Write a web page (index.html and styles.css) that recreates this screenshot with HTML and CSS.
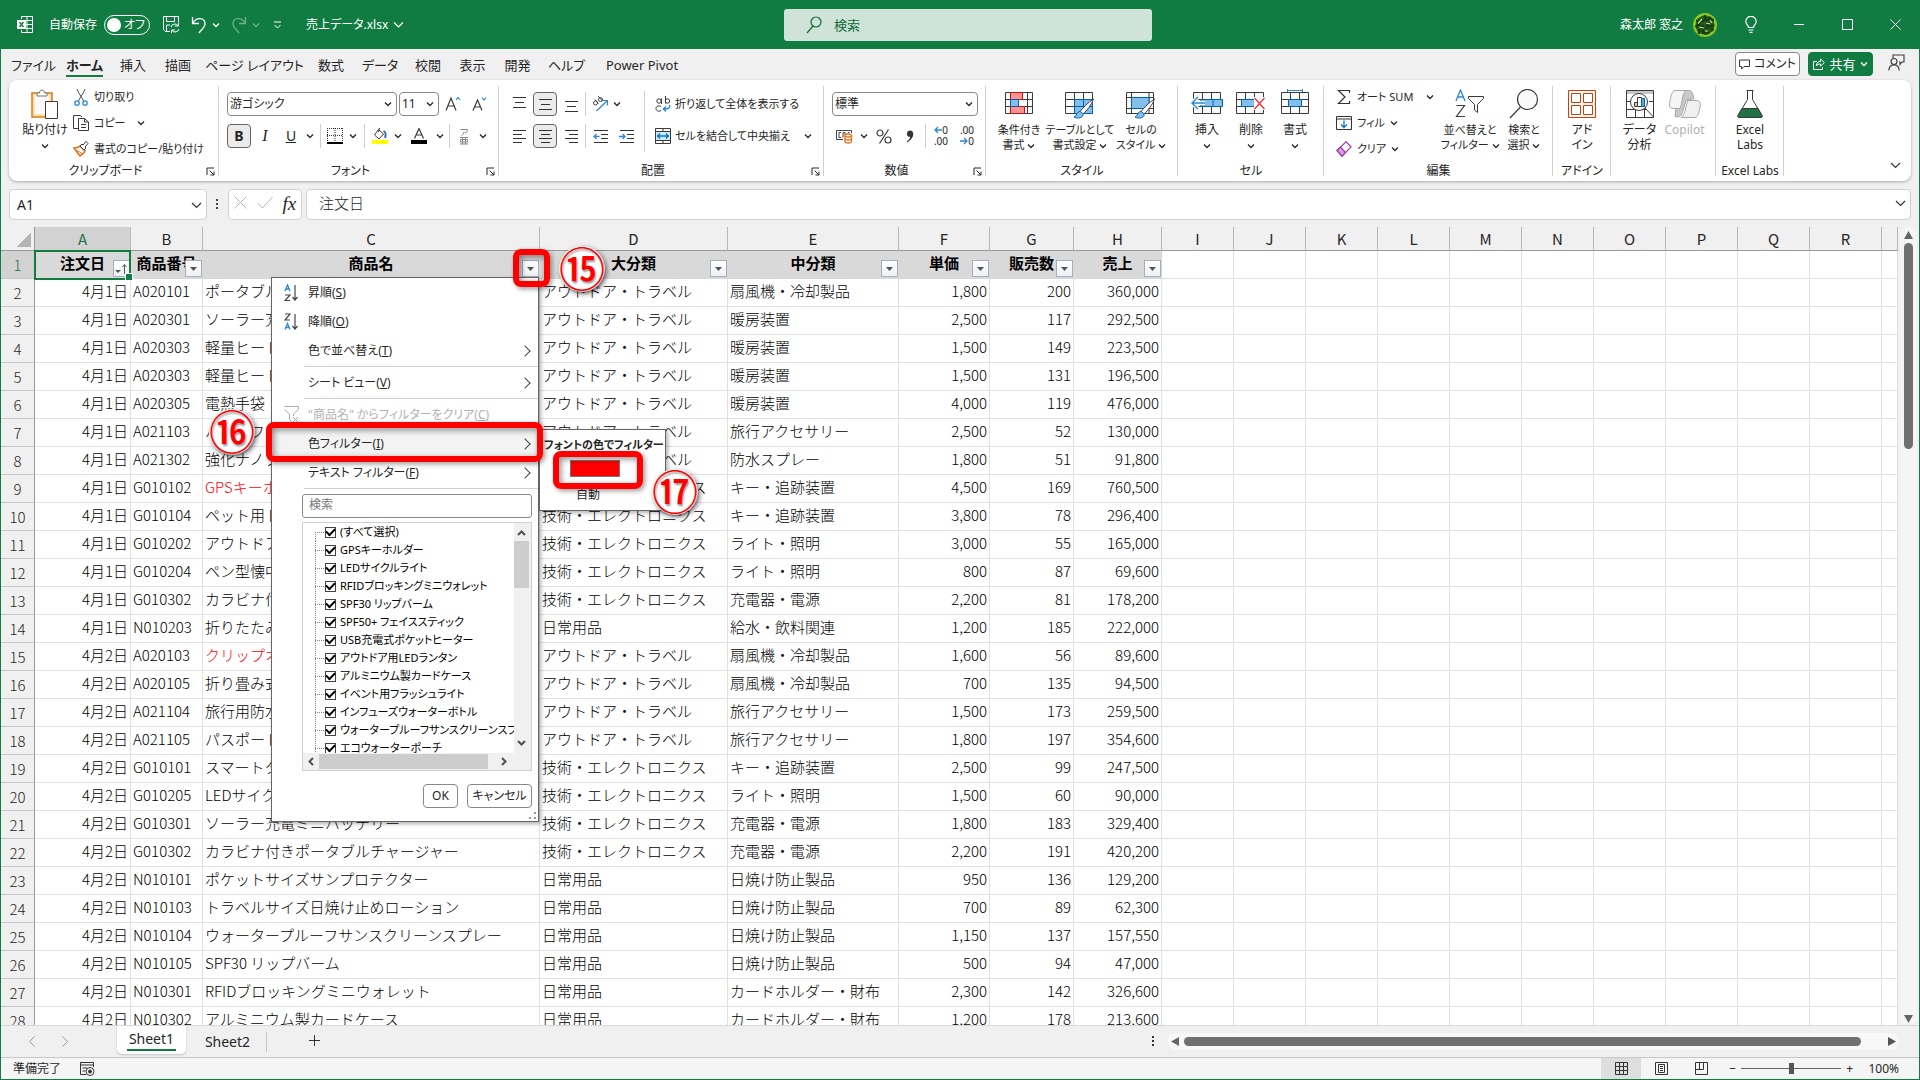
FILE: index.html
```html
<!DOCTYPE html>
<html lang="ja">
<head>
    <meta charset="UTF-8">
    <meta name="viewport" content="width=device-width, initial-scale=1.0">
    <title>売上データ.xlsx</title>
    <link rel="stylesheet" href="styles.css">
</head>
<body>

<!-- Shared icons -->
<svg class="defs" aria-hidden="true">
    <symbol id="chev" viewBox="0 0 8 6"><path d="M1 1.5 4 4.5 7 1.5" fill="none" stroke="currentColor" stroke-width="1.3"/></symbol>
    <symbol id="launch" viewBox="0 0 9 9"><path d="M1 8V1H8M3.5 3.5 8 8M8 4.5V8H4.5" fill="none" stroke="currentColor"/></symbol>
    <symbol id="grid28" viewBox="0 0 28 22"><path d="M.5.5h27v21H.5zM.5 7.5h27M.5 14.5h27M9.5.5v21M18.5.5v21" fill="#fafafa" stroke="#3b3a39"/></symbol>
    <symbol id="brush" viewBox="0 0 22 22"><path d="M21 1C15 5 10 10 7 14l3 3C14 13 19 7 21 1z" fill="#fff" stroke="#3b3a39"/><path d="M7 14c-4 0-3 5-6.500 6 4 2 10 1 9.500-3z" fill="#83beec" stroke="#0063b1"/></symbol>
</svg>

<!-- Title bar -->
<header class="titlebar">
    <div class="title-left">
        <svg class="logo" width="16" height="17" viewBox="0 0 16 17" fill="none" stroke="#fff"><path d="M4.500 3V.5h11v16h-11V14M10 .5v16M4.500 4.500h11M9 8.500h6.500M4.500 12.500h11"/><path d="M0 4h9v9H0z" fill="#fff" stroke="none"/><path d="m2.500 6 4 5m0-5-4 5" stroke="#107c41" stroke-width="1.400"/></svg>
        <label class="autosave">自動保存 <span class="toggle"><input type="checkbox"><span>オフ</span></span></label>
        <button class="tbtn save" aria-label="保存"><svg width="17" height="17" viewBox="0 0 17 17" fill="none" stroke="#fff"><path d="M7 15.500H2.500l-2-2V.5h15V6M3.500.5v5h8v-5M3.500 15v-6H7"/><path d="M8 11a4 4 0 0 1 7-1.500M15.500 6.500v3.500H12M16 13a4 4 0 0 1-7 1.500M8.500 17v-3H12"/></svg></button>
        <button class="tbtn" aria-label="元に戻す"><svg width="16" height="18" viewBox="0 0 16 18" fill="none" stroke="#fff" stroke-width="1.300"><path d="M1.500 1v6.500H8M2 7c3-6 12-6 12 1 0 3-3 5-6 9"/></svg><svg class="chev"><use href="#chev"/></svg></button>
        <button class="tbtn faded" aria-label="やり直し"><svg width="16" height="18" viewBox="0 0 16 18" fill="none" stroke="#fff" stroke-width="1.300"><path d="M14.500 1v6.500H8M14 7C11 1 2 1 2 8c0 3 3 5 6 9"/></svg><svg class="chev"><use href="#chev"/></svg></button>
        <button class="tbtn more" aria-label="カスタマイズ"><svg width="9" height="8" viewBox="0 0 9 8" fill="none" stroke="#fff"><path d="M1 1h7M1.500 4l3 3 3-3"/></svg></button>
        <button class="tbtn file">売上データ.xlsx<svg width="11" height="8" viewBox="0 0 11 8" fill="none" stroke="#fff" stroke-width="1.200"><path d="m1 1.500 4.500 4.500L10 1.500"/></svg></button>
    </div>
    <label class="search">
        <svg width="16" height="18" viewBox="0 0 16 18" fill="none" stroke="#0f6b38" stroke-width="1.200"><circle cx="10" cy="6" r="5"/><path d="M7 10 1 17"/></svg>
        <input type="text" placeholder="検索" aria-label="検索">
    </label>
    <div class="title-right">
        <span>森太郎 窓之</span>
        <svg class="avatar" width="24" height="24" viewBox="0 0 24 24"><circle cx="12" cy="12" r="12" fill="#8cc81e"/><circle cx="12" cy="12" r="9.500" fill="#2a5a1c"/><path d="M3 8h8M12 2v6M12 7h9M8 8 4 13h7M14 9c0 4 4 5 7 3M16 4l4 4M6 16v5M10 15v4c0 2 5 2 6 0M13 13l2 3M18 15l2 3" fill="none" stroke="#123f16" stroke-width="2.600"/><path d="M5 10.500 9 6M13 10l4 1M6 14l5 1M12 18h3M17 7l2 3" fill="none" stroke="#c6e58a" stroke-width="1.200"/></svg>
        <button class="win" aria-label="ヒント"><svg width="12" height="17" viewBox="0 0 12 17" fill="none" stroke="#fff" stroke-width="1.200"><path d="M3.500 11.500C3.500 9 .8 8.500.8 5.500a5.200 5.200 0 0 1 10.400 0c0 3-2.700 3.500-2.700 6zM3.500 14h5M4.500 16.300h3"/></svg></button>
        <button class="win" aria-label="最小化"><svg width="10" height="10" viewBox="0 0 10 10" stroke="#fff"><path d="M0 4.500h10"/></svg></button>
        <button class="win" aria-label="最大化"><svg width="11" height="11" viewBox="0 0 11 11" fill="none" stroke="#fff"><path d="M.5.5h10v10H.5z"/></svg></button>
        <button class="win" aria-label="閉じる"><svg width="11" height="11" viewBox="0 0 11 11" stroke="#fff"><path d="m.5.5 10 10m0-10-10 10"/></svg></button>
    </div>
</header>

<!-- Ribbon tabs -->
<div class="tabbar">
    <nav class="tabs">
        <a href="#">ファイル</a>
        <a href="#" class="active">ホーム</a>
        <a href="#">挿入</a>
        <a href="#">描画</a>
        <a href="#">ページ レイアウト</a>
        <a href="#">数式</a>
        <a href="#">データ</a>
        <a href="#">校閲</a>
        <a href="#">表示</a>
        <a href="#">開発</a>
        <a href="#">ヘルプ</a>
        <a href="#">Power Pivot</a>
    </nav>
    <div class="tab-actions">
        <button class="comment"><svg width="11" height="11" viewBox="0 0 11 11" fill="none" stroke="#333"><path d="M.5 1h10v6.500H5L2.500 10V7.500h-2z"/></svg>コメント</button>
        <button class="share"><svg width="12" height="12" viewBox="0 0 12 12" fill="none" stroke="#fff"><path d="M4 3.500H.5v8h9V9M7.500 1v2.500C5 3.500 3.500 5 3.300 8c1-1.500 2.200-2 4.200-2v2.300L11.300 4.500z"/></svg>共有<svg class="chev"><use href="#chev"/></svg></button>
        <button class="present" aria-label="プレゼンス"><svg width="17" height="17" viewBox="0 0 17 17" fill="none" stroke="#3b3a39" stroke-width="1.100"><path d="M5 4V1h11v7h-2l-2 2.500V8h-1"/><circle cx="6" cy="7.500" r="3"/><path d="M.8 16.500c.5-7.500 10-7.500 10.400 0"/></svg></button>
    </div>
</div>

<!-- Ribbon -->
<div class="ribbon">
    <section class="group g-clip">
        <div class="body">
            <button class="big">
                <svg width="28" height="30" viewBox="0 0 28 30"><path d="M1 4h20v24H1z" fill="#fde3b0" stroke="#e07b10" stroke-width="1.500"/><path d="M4 6h14v19H4z" fill="#fafafa"/><path d="M6 7V4h2.500c0-4 5-4 5 0H16v3z" fill="#fff" stroke="#777"/><path d="M14.500 12.500h12v17h-12z" fill="#fff" stroke="#3b3a39"/></svg>
                <span>貼り付け</span><svg class="chev"><use href="#chev"/></svg>
            </button>
            <div class="rows">
                <button><svg width="16" height="17" viewBox="0 0 16 17" fill="none"><path d="M4 0c1 4 5 8 6.500 12M12 0c-1 4-5 8-6.500 12" stroke="#555"/><circle cx="4" cy="14" r="2.200" stroke="#2b88d8" stroke-width="1.300"/><circle cx="12" cy="14" r="2.200" stroke="#2b88d8" stroke-width="1.300"/></svg>切り取り</button>
                <button><svg width="16" height="16" viewBox="0 0 16 16" fill="none" stroke="#3b3a39"><path d="M5 13.500H.5V.5h7L9 2"/><path d="M5.500 3.500h6L15.500 7v8.500h-10zM11.500 3.500V7h4M8 9.500h5M8 12.500h5"/></svg>コピー <svg class="chev far"><use href="#chev"/></svg></button>
                <button><svg width="16" height="16" viewBox="0 0 16 16"><path d="M1 7c3 0 5-1 6-2l5 5c-1 2-3 4-5 5z" fill="#fff" stroke="#e0701a" stroke-width="1.600"/><path d="m3 9 7 4" stroke="#e0701a"/><path d="m7 5 2-2 1 1 3-3.500 2 2L12 6l1 1-2 2z" fill="#fff" stroke="#3b3a39"/></svg>書式のコピー/貼り付け</button>
            </div>
        </div>
        <footer>クリップボード<svg class="launch"><use href="#launch"/></svg></footer>
    </section>

    <section class="group g-font">
        <div class="body stack">
            <div class="row">
                <span class="combo font-name"><select aria-label="フォント"><option>游ゴシック</option></select><svg class="chev"><use href="#chev"/></svg></span>
                <span class="combo font-size"><select aria-label="フォント サイズ"><option>11</option></select><svg class="chev"><use href="#chev"/></svg></span>
                <button class="tool" aria-label="拡大"><svg width="17" height="16" viewBox="0 0 17 16" fill="none"><path d="M1 14.500 6 2l5 12.500M3 10h6" stroke="#3b3a39" stroke-width="1.200"/><path d="m11 4 2-2.500L15 4" stroke="#2b88d8" stroke-width="1.200"/></svg></button>
                <button class="tool" aria-label="縮小"><svg width="17" height="16" viewBox="0 0 17 16" fill="none"><path d="M2 14.500 6.500 4 11 14.500M3.500 11h6" stroke="#3b3a39" stroke-width="1.200"/><path d="m11 1.500 2 2.500 2-2.500" stroke="#2b88d8" stroke-width="1.200"/></svg></button>
            </div>
            <div class="row font-row">
                <button class="tool on"><b>B</b></button>
                <button class="tool"><i>I</i></button>
                <button class="tool"><u>U</u></button>
                <svg class="chev"><use href="#chev"/></svg>
                <span class="sep"></span>
                <button class="tool" aria-label="罫線"><svg width="16" height="16" viewBox="0 0 16 16" fill="none" stroke="#333"><path d="M.5 0v15M15.500 0v15M0 .5h16M8 0v15M0 7.500h16" stroke-dasharray="1 1"/><path d="M0 15h16" stroke="#000" stroke-width="2"/></svg></button>
                <svg class="chev"><use href="#chev"/></svg>
                <span class="sep"></span>
                <button class="tool" aria-label="塗りつぶし"><svg width="16" height="16" viewBox="0 0 16 16" fill="none"><path d="M6.500 1.500 11.500 6 7 11 2.500 7z" stroke="#3b3a39"/><path d="m6.500 4 1-4" stroke="#3b3a39"/><path d="M11.500 3c2 1 2.500 4 1.500 7" stroke="#2b68a8" stroke-width="1.800"/><path d="M0 12h16v4H0z" fill="#ff0"/></svg></button>
                <svg class="chev"><use href="#chev"/></svg>
                <button class="tool" aria-label="フォントの色"><svg width="16" height="16" viewBox="0 0 16 16" fill="none"><path d="m3.500 10.500 4.500-10 4.500 10M5 7h6" stroke="#3b3a39" stroke-width="1.200"/><path d="M0 12h16v4H0z" fill="#000"/></svg></button>
                <svg class="chev"><use href="#chev"/></svg>
                <span class="sep"></span>
                <button class="tool" aria-label="ふりがな"><svg width="10" height="17" viewBox="0 0 10 17" fill="none" stroke="#888"><path d="M1.500 1.500h7c0 2-1 3-2.500 3.500M5 3.500c0 2-1 3-2.500 4M1 9.500h8M1 16h8M3.500 9.500V16M6.500 9.500V16M1.500 11.500h7v2.500h-7z"/></svg></button>
                <svg class="chev"><use href="#chev"/></svg>
            </div>
        </div>
        <footer>フォント<svg class="launch"><use href="#launch"/></svg></footer>
    </section>

    <section class="group g-align">
        <div class="body">
            <div class="stack">
                <div class="row align-row">
                    <button class="tool" aria-label="上揃え"><svg width="13" height="16" viewBox="0 0 13 16" stroke="#333"><path d="M0 1.500h13M2 6.500h9M0 11.500h13"/></svg></button>
                    <button class="tool on" aria-label="上下中央揃え"><svg width="13" height="16" viewBox="0 0 13 16" stroke="#333"><path d="M0 3.500h13M2 8.500h9M0 13.500h13"/></svg></button>
                    <button class="tool" aria-label="下揃え"><svg width="13" height="16" viewBox="0 0 13 16" stroke="#333"><path d="M0 5.500h13M2 10.500h9M0 15.500h13"/></svg></button>
                    <span class="sep"></span>
                    <button class="tool" aria-label="方向"><svg width="17" height="16" viewBox="0 0 17 16" fill="none"><path d="M4.500 15 15 5M10.500 4.500H15.500V9.500" stroke="#2b88d8" stroke-width="1.200"/><circle cx="3.500" cy="7" r="2" stroke="#444"/><path d="m3 3.500 3.500 4M6 0l4.500 5" stroke="#444"/><circle cx="8.500" cy="3.500" r="2" stroke="#444"/></svg></button>
                    <svg class="chev"><use href="#chev"/></svg>
                </div>
                <div class="row align-row">
                    <button class="tool" aria-label="左揃え"><svg width="13" height="15" viewBox="0 0 13 15" stroke="#333"><path d="M0 1.500h13M0 5.500h9M0 9.500h13M0 13.500h9"/></svg></button>
                    <button class="tool on" aria-label="中央揃え"><svg width="13" height="15" viewBox="0 0 13 15" stroke="#333"><path d="M0 1.500h13M2 5.500h9M0 9.500h13M2 13.500h9"/></svg></button>
                    <button class="tool" aria-label="右揃え"><svg width="13" height="15" viewBox="0 0 13 15" stroke="#333"><path d="M0 1.500h13M4 5.500h9M0 9.500h13M4 13.500h9"/></svg></button>
                    <span class="sep"></span>
                    <button class="tool" aria-label="インデントを減らす"><svg width="15" height="14" viewBox="0 0 15 14" fill="none" stroke="#333"><path d="M1 1.500h14M8 5.500h7M8 9.500h7M1 13.500h14"/><path d="M6.500 7.500H1M3.500 5 1 7.500 3.500 10" stroke="#2b88d8" stroke-width="1.300"/></svg></button>
                    <button class="tool" aria-label="インデントを増やす"><svg width="15" height="14" viewBox="0 0 15 14" fill="none" stroke="#333"><path d="M1 1.500h14M8 5.500h7M8 9.500h7M1 13.500h14"/><path d="M0 7.500h6M3.500 5 6 7.500 3.500 10" stroke="#2b88d8" stroke-width="1.300"/></svg></button>
                </div>
            </div>
            <span class="sep tall"></span>
            <div class="stack">
                <button class="row wide"><svg width="16" height="16" viewBox="0 0 16 16" fill="none"><g stroke="#3b3a39"><circle cx="4" cy="5" r="2.200"/><path d="M6.500 2.500V8M10.500 0v7.500"/><circle cx="12.500" cy="5" r="2.200"/><path d="M6 10.500c-3-1.500-5 0-5 2s2 3.500 5 2"/></g><path d="M14.500 9c1 3-1 4-6 4M11 10.500 8.300 13l2.700 2.500" stroke="#2b88d8" stroke-width="1.300"/></svg>折り返して全体を表示する</button>
                <button class="row wide"><svg width="16" height="16" viewBox="0 0 16 16" fill="none"><path d="M.5.5h15v15H.5zM.5 3.500h15M.5 12.500h15M8 .5v3M8 12.500v3" stroke="#3b3a39"/><path d="M1 4h14v8H1z" fill="#cfe7f8"/><path d="M2.500 8h11M5 5.500 2.500 8 5 10.500M11 5.500 13.500 8 11 10.500" stroke="#0b74c4" stroke-width="1.300"/></svg>セルを結合して中央揃え <svg class="chev push"><use href="#chev"/></svg></button>
            </div>
        </div>
        <footer>配置<svg class="launch"><use href="#launch"/></svg></footer>
    </section>

    <section class="group g-num">
        <div class="body stack">
            <div class="row">
                <span class="combo format"><select aria-label="表示形式"><option>標準</option></select><svg class="chev"><use href="#chev"/></svg></span>
            </div>
            <div class="row num-row">
                <button class="tool" aria-label="通貨"><svg width="17" height="15" viewBox="0 0 17 15" fill="none"><path d="M7 10.500H.5v-9h15V4M5 3.500H3v5h2M7 8.500v-5h2v2M12 3.500h1.500" stroke="#444"/><path d="M9 6.500v6c0 2 6.500 2 6.500 0v-6c0-2-6.500-2-6.500 0z" fill="#fff" stroke="#e0701a" stroke-width="1.300"/><path d="M9 6.500c0 2 6.500 2 6.500 0M9 9.500c0 2 6.500 2 6.500 0" stroke="#e0701a" stroke-width="1.300"/></svg></button>
                <svg class="chev"><use href="#chev"/></svg>
                <button class="tool" aria-label="パーセント"><svg width="16" height="15" viewBox="0 0 16 15" fill="none" stroke="#3b3a39" stroke-width="1.200"><circle cx="4" cy="4" r="3"/><circle cx="12" cy="11" r="3"/><path d="M12.500.5 3.500 14.500"/></svg></button>
                <button class="tool" aria-label="桁区切り"><svg width="8" height="13" viewBox="0 0 8 13"><path d="M4 .5c5 0 4.500 8-3 12l-.5-.8C3 10 4.500 8 4 6.800-.5 7 .2.5 4 .5z" fill="#333"/></svg></button>
                <span class="sep"></span>
                <button class="tool decimal"><svg width="8" height="8" viewBox="0 0 8 8" fill="none" stroke="#2b88d8" stroke-width="1.300"><path d="M8 4H1M4 1 1 4l3 3"/></svg>0<br>.00</button>
                <button class="tool decimal">.00<br><svg width="8" height="8" viewBox="0 0 8 8" fill="none" stroke="#2b88d8" stroke-width="1.300"><path d="M0 4h7M4 1l3 3-3 3"/></svg>0</button>
            </div>
        </div>
        <footer>数値<svg class="launch"><use href="#launch"/></svg></footer>
    </section>

    <section class="group g-style">
        <div class="body">
            <button class="big">
                <svg width="28" height="30" viewBox="0 0 28 30"><path d="M.5 3.500h27v21H.5zM.5 10.500h27M.5 17.500h27M5.500 3.500v21M22.500 3.500v21" fill="#fafafa" stroke="#3b3a39"/><path d="M5.500 3.500h12v7h-12zM5.500 17.500h14v7h-14z" fill="#ff9191" stroke="#d40f0f"/><path d="M5.500 10.500h8v7h-8z" fill="#83beec" stroke="#0063b1"/></svg>
                <span>条件付き<br>書式 <svg class="chev"><use href="#chev"/></svg></span>
            </button>
            <button class="big">
                <svg width="30" height="30" viewBox="0 0 30 30"><use href="#grid28" y="3" width="28" height="22"/><path d="M9.500 10.500h18v14h-18zM9.500 17.500h18M18.500 10.500v14" fill="#83beec" stroke="#0063b1"/><use href="#brush" x="8" y="9" width="22" height="21"/></svg>
                <span>テーブルとして<br>書式設定 <svg class="chev"><use href="#chev"/></svg></span>
            </button>
            <button class="big">
                <svg width="30" height="30" viewBox="0 0 30 30"><path d="M.5 3.500h27v21H.5zM.5 8.500h27M.5 19.500h27M5.500 3.500v21M23 3.500v21" fill="#fafafa" stroke="#3b3a39"/><path d="M5.500 8.500H23v11H5.500z" fill="#83beec" stroke="#0063b1"/><use href="#brush" x="8" y="9" width="22" height="21"/></svg>
                <span>セルの<br>スタイル <svg class="chev"><use href="#chev"/></svg></span>
            </button>
        </div>
        <footer>スタイル</footer>
    </section>

    <section class="group g-cell">
        <div class="body">
            <button class="big">
                <svg width="32" height="30" viewBox="0 0 32 30" fill="none"><use href="#grid28" x="2" y="3" width="28" height="22"/><path d="M10 10.500h21.500v7H10zM22 10.500v7" fill="#83beec" stroke="#0063b1"/><path d="M1 14h13M7 8l-6 6 6 6" stroke="#fff" stroke-width="4"/><path d="M1 14h13M7 8l-6 6 6 6" stroke="#2b88d8" stroke-width="1.500"/></svg>
                <span>挿入</span><svg class="chev"><use href="#chev"/></svg>
            </button>
            <button class="big">
                <svg width="30" height="30" viewBox="0 0 30 30" fill="none"><use href="#grid28" y="3" width="28" height="22"/><path d="M5.500 10.500h14v7h-14z" fill="#83beec" stroke="#0063b1"/><path d="M18 8h12v13H18z" fill="#fff"/><path d="m18.500 9 10 11m0-11-10 11" stroke="#e8383d" stroke-width="1.400"/></svg>
                <span>削除</span><svg class="chev"><use href="#chev"/></svg>
            </button>
            <button class="big">
                <svg width="28" height="30" viewBox="0 0 28 30" fill="none"><use href="#grid28" y="3" width="28" height="22"/><path d="M7.500 10.500h13v7h-13z" fill="#83beec" stroke="#0063b1"/><path d="M6.500 0v3M21.500 0v3M6.500 1.500h15" stroke="#2b88d8"/></svg>
                <span>書式</span><svg class="chev"><use href="#chev"/></svg>
            </button>
        </div>
        <footer>セル</footer>
    </section>

    <section class="group g-edit">
        <div class="body">
            <div class="rows">
                <button><svg width="16" height="16" viewBox="0 0 16 16" fill="none" stroke="#333" stroke-width="1.200"><path d="M13.500 4V1.500h-11L9 8l-6.500 6.500h11V12"/></svg>オート SUM <svg class="chev push"><use href="#chev"/></svg></button>
                <button><svg width="16" height="16" viewBox="0 0 16 16" fill="none"><path d="M.5 1.500h15v13H.5zM.5 4h15" stroke="#333"/><path d="M8 5.500v7M5 9.500l3 3 3-3" stroke="#0b74c4" stroke-width="1.300"/></svg>フィル <svg class="chev"><use href="#chev"/></svg></button>
                <button><svg width="16" height="16" viewBox="0 0 16 16" fill="#fff" stroke="#a03aa8" stroke-width="1.200"><path d="M1 9.500 10 .8l5 5-9 9.400z"/><path d="M1 9.500 4.500 6l5 5.500L6 15.200z" fill="#d59ddb"/></svg>クリア <svg class="chev"><use href="#chev"/></svg></button>
            </div>
            <button class="big">
                <svg width="30" height="30" viewBox="0 0 30 30" fill="none"><path d="m1 12 4.500-11L10 12M2.500 8h6" stroke="#2b88d8" stroke-width="1.300"/><path d="M1.500 16.500h8l-8 11h8.500" stroke="#3b3a39" stroke-width="1.200"/><path d="M13.500 7.500h15v2l-6 6v8l-3-2.500v-5.500l-6-6z" fill="#fafafa" stroke="#3b3a39"/></svg>
                <span>並べ替えと<br>フィルター <svg class="chev"><use href="#chev"/></svg></span>
            </button>
            <button class="big">
                <svg width="30" height="30" viewBox="0 0 30 30" fill="#fafafa" stroke="#3b3a39" stroke-width="1.200"><circle cx="18.500" cy="10.500" r="10"/><path d="M11.500 18 1 29"/></svg>
                <span>検索と<br>選択 <svg class="chev"><use href="#chev"/></svg></span>
            </button>
        </div>
        <footer>編集</footer>
    </section>

    <section class="group g-addin">
        <div class="body">
            <button class="big">
                <svg width="28" height="30" viewBox="0 0 28 30" fill="none" stroke="#d83b01"><path d="M.5 1.500h27v27H.5zM3.500 4.500h9v9h-9zM15.500 4.500h9v9h-9zM3.500 16.500h9v9h-9zM15.500 16.500h9v9h-9z"/></svg>
                <span>アド<br>イン</span>
            </button>
        </div>
        <footer>アドイン</footer>
    </section>

    <section class="group g-data">
        <div class="body">
            <button class="big">
                <svg width="28" height="30" viewBox="0 0 28 30" fill="none" stroke="#3b3a39"><path d="M.5 1.500h27v27H.5zM.5 12.500h5M23 12.500h4M.5 20.500h20M9.500 20v8M18.500 20v8"/><path d="M1 2h26v3H1z" fill="#c8c6c4" stroke="none"/><circle cx="13" cy="13" r="8.500" fill="#fff"/><path d="M19 19l8.500 9"/><path d="M8.500 13.500h3v4h-3z" fill="#c8c6c4"/><path d="M11.500 8.500h4v9h-4z" fill="#fff"/><path d="M15.500 9.500h3v8h-3z" fill="#5aa6e0" stroke="#0063b1"/></svg>
                <span>データ<br>分析</span>
            </button>
            <button class="big" disabled>
                <svg width="32" height="30" viewBox="0 0 32 30" stroke="#a6a6a6"><path d="M9 1.500h11c3 0 4 4 5 8l-8 2-4 13c-1 3-4 4-7 3z" fill="#c9c9c9"/><path d="M6 1.500h11c-4 3-3 11-6 18H4c-4 0-4-4-3-8s2-10 5-10z" fill="#f5f5f5" stroke-linejoin="round"/><path d="M26 28.500H12c5-3 4-11 7-17h8c4 0 5 3 4 7s-2 10-5 10z" fill="#f0f0f0"/></svg>
                <span>Copilot</span>
            </button>
        </div>
    </section>

    <section class="group g-labs">
        <div class="body">
            <button class="big">
                <svg width="28" height="30" viewBox="0 0 28 30" fill="none" stroke="#3b3a39"><path d="M10.500 1.500h7M11.500 1.500v9L2 26.500c-.5 1 0 2 1.500 2h21c1.500 0 2-1 1.500-2L16.500 10.500v-9" /><path d="M6 19.500h16l4 7c.5 1 0 2-1.500 2h-21c-1.500 0-2-1-1.500-2z" fill="#217346"/></svg>
                <span>Excel<br>Labs</span>
            </button>
        </div>
        <footer>Excel Labs</footer>
    </section>

    <button class="collapse" aria-label="リボンを折りたたむ"><svg width="11" height="7" viewBox="0 0 11 7" fill="none" stroke="#333" stroke-width="1.200"><path d="m1 1 4.500 4.500L10 1"/></svg></button>
</div>

<!-- Formula bar -->
<div class="formula">
    <label class="box name"><input type="text" value="A1" aria-label="名前ボックス"><svg width="11" height="7" viewBox="0 0 11 7" fill="none" stroke="#333" stroke-width="1.200"><path d="m1 1 4.500 4.500L10 1"/></svg></label>
    <svg class="dots" width="3" height="11" viewBox="0 0 3 11" fill="#444"><path d="M0 0h2v2H0zM0 4h2v2H0zM0 8h2v2H0z"/></svg>
    <div class="box fx">
        <button aria-label="キャンセル"><svg width="13" height="13" viewBox="0 0 13 13" stroke="#b5b5b5"><path d="m.5.5 12 12m0-12-12 12"/></svg></button>
        <button aria-label="入力"><svg width="16" height="13" viewBox="0 0 16 13" fill="none" stroke="#b5b5b5"><path d="m.5 7 5 5 10-11"/></svg></button>
        <button class="fx-btn">fx</button>
    </div>
    <label class="box value"><input type="text" value="注文日" aria-label="数式バー"><svg width="11" height="7" viewBox="0 0 11 7" fill="none" stroke="#333" stroke-width="1.200"><path d="m1 1 4.500 4.500L10 1"/></svg></label>
</div>

<!-- Worksheet -->
<main class="sheet">
    <div class="cells">
        <table>
            <colgroup>
                <col class="c-no"><col class="c-a"><col class="c-b"><col class="c-c"><col class="c-d"><col class="c-e"><col class="c-f"><col class="c-g"><col class="c-h">
                <col span="10" class="c-x"><col>
            </colgroup>
            <thead><tr id="letters"><th class="corner"></th></tr></thead>
            <tbody id="rows"></tbody>
        </table>
    </div>
    <div class="vscroll">
        <svg width="9" height="8" viewBox="0 0 9 8" fill="#666"><path d="M4.500 0 9 8H0z"/></svg>
        <span class="thumb"></span>
        <svg width="9" height="8" viewBox="0 0 9 8" fill="#666"><path d="M4.500 8 9 0H0z"/></svg>
    </div>

    <!-- Filter menu of column C -->
    <div class="menu">
        <button class="item"><svg width="14" height="18" viewBox="0 0 14 18" fill="none"><path d="M1 7 3.500 1 6 7M2 5h3" stroke="#2b88d8" stroke-width="1.300"/><path d="M1 11h5l-5 5.500h5M11 1v15M8.500 13l2.500 3 2.500-3" stroke="#444" stroke-width="1.200"/></svg><span>昇順(<u>S</u>)</span></button>
        <button class="item"><svg width="14" height="18" viewBox="0 0 14 18" fill="none"><path d="M1 16.500 3.500 10.500 6 16.500M2 14.500h3" stroke="#2b88d8" stroke-width="1.300"/><path d="M1 1h5L1 7h5M11 1v15M8.500 13l2.500 3 2.500-3" stroke="#444" stroke-width="1.200"/></svg><span>降順(<u>O</u>)</span></button>
        <button class="item sub"><span>色で並べ替え(<u>T</u>)</span></button>
        <hr>
        <button class="item sub"><span>シート ビュー(<u>V</u>)</span></button>
        <hr>
        <button class="item" disabled><svg width="15" height="17" viewBox="0 0 15 17" fill="none" stroke="#aaa"><path d="M.5.5h14v3L9.500 8v2M.5 3.500l5 4.500v5.500l2 2M9 11l5 5M14 11l-5 5"/></svg><span>"商品名" からフィルターをクリア(<u>C</u>)</span></button>
        <button class="item sub hover"><span>色フィルター(<u>I</u>)</span></button>
        <button class="item sub"><span>テキスト フィルター(<u>F</u>)</span></button>
        <hr>
        <input class="menu-search" type="text" placeholder="検索" aria-label="検索">
        <div class="tree">
            <ul id="tree"></ul>
            <div class="tree-v"><svg width="9" height="6" viewBox="0 0 9 6"><path d="m1 5 3.500-3.500L8 5"/></svg><span></span><svg width="9" height="6" viewBox="0 0 9 6"><path d="M1 1 4.500 4.500 8 1"/></svg></div>
            <div class="tree-h"><svg width="6" height="9" viewBox="0 0 6 9"><path d="M5 1 1.500 4.500 5 8"/></svg><span></span><svg width="6" height="9" viewBox="0 0 6 9"><path d="m1 1 3.500 3.500L1 8"/></svg></div>
        </div>
        <div class="menu-buttons">
            <button class="ok">OK</button>
            <button class="cancel">キャンセル</button>
        </div>
        <svg class="grip" width="8" height="8" viewBox="0 0 8 8" fill="#999"><path d="M5 0h2v2H5zM0 5h2v2H0zM5 5h2v2H5z"/></svg>
    </div>

    <div class="submenu">
        <strong>フォントの色でフィルター</strong>
        <button class="swatch" aria-label="赤"></button>
        <button class="auto">自動</button>
    </div>

    <!-- Step markers -->
    <div class="mark mark-arrow"></div>
    <div class="mark mark-item"></div>
    <div class="mark mark-color"></div>
    <span class="step step-15">⑮</span>
    <span class="step step-16">⑯</span>
    <span class="step step-17">⑰</span>
</main>

<!-- Sheet tabs -->
<div class="sheetbar">
    <div class="sheet-nav">
        <svg width="6" height="11" viewBox="0 0 6 11"><path d="M5.500.5.5 5.500l5 5"/></svg>
        <svg width="6" height="11" viewBox="0 0 6 11"><path d="m.5.5 5 5-5 5"/></svg>
    </div>
    <button class="sheet-tab current"><span>Sheet1</span></button>
    <button class="sheet-tab"><span>Sheet2</span></button>
    <button class="add" aria-label="新しいシート"><svg width="11" height="11" viewBox="0 0 11 11" stroke="#333"><path d="M5.500 0v11M0 5.500h11"/></svg></button>
    <svg class="dots" width="3" height="11" viewBox="0 0 3 11" fill="#333"><path d="M0 0h2v2H0zM0 4h2v2H0zM0 8h2v2H0z"/></svg>
    <div class="hscroll">
        <svg width="8" height="9" viewBox="0 0 8 9" fill="#666"><path d="M0 4.500 8 0v9z"/></svg>
        <span class="thumb"></span>
        <svg width="8" height="9" viewBox="0 0 8 9" fill="#555"><path d="M8 4.500 0 0v9z"/></svg>
    </div>
</div>

<!-- Status bar -->
<footer class="status">
    <span>準備完了</span>
    <svg class="macro" width="15" height="14" viewBox="0 0 15 14" fill="none" stroke="#333"><path d="M6 12.500H.5V.5h13V5M.5 3h13M2.500 6H7M2.500 9h3"/><circle cx="10" cy="9.500" r="4"/><circle cx="10" cy="9.500" r="1.500" fill="#333"/></svg>
    <div class="views">
        <button class="on" aria-label="標準"><svg width="13" height="13" viewBox="0 0 13 13" fill="none" stroke="#333"><path d="M.5.5h12v12H.5zM.5 4.500h12M.5 8.500h12M4.500.5v12M8.500.5v12"/></svg></button>
        <button aria-label="ページ レイアウト"><svg width="13" height="13" viewBox="0 0 13 13" fill="none" stroke="#333"><path d="M.5.5h12v12H.5zM3.500 2.500h6v8h-6zM5 4.500h3M5 6.500h3M5 8.500h3"/></svg></button>
        <button aria-label="改ページ プレビュー"><svg width="13" height="13" viewBox="0 0 13 13" fill="none" stroke="#333"><path d="M.5.5h12v12H.5zM.5 7.500h8v-7M4.500.5v7"/></svg></button>
    </div>
    <div class="zoom"><span>−</span><input type="range" min="0" max="200" value="100" aria-label="ズーム"><span>+</span><output>100%</output></div>
</footer>

<script src="script.js"></script>
</body>
</html>
```
FILE: styles.css
```css
* {
    box-sizing: border-box;
}

body {
    margin: 0;
    height: 100vh;
    display: flex;
    flex-direction: column;
    overflow: hidden;
    background: #f0f0f0;
    border: 1px solid #107c41;
    border-top: none;
    color: #262626;
    font-family: "Noto Sans", "Noto Sans CJK JP", sans-serif;
    font-size: 12px;
    line-height: 16px;
    font-feature-settings: "palt";
}

button, input, select {
    margin: 0;
    padding: 0;
    border: none;
    background: none;
    color: inherit;
    font: inherit;
    font-feature-settings: inherit;
    outline: none;
}

button {
    white-space: nowrap;
}

svg {
    flex: none;
}

.defs {
    display: none;
}

.chev {
    width: 8px;
    height: 6px;
    justify-self: center;
}

/* Title bar */
.titlebar {
    display: grid;
    grid-template-columns: 1fr 368px 1fr;
    align-items: center;
    height: 49px;
    padding-left: 16px;
    background: #107c41;
    color: #fff;
}

.title-left, .title-right {
    display: flex;
    align-items: center;
}

.autosave {
    display: flex;
    align-items: center;
    gap: 7px;
    margin: 0 13px 0 16px;
}

.toggle {
    display: flex;
    align-items: center;
    justify-content: space-between;
    width: 46px;
    height: 20px;
    padding: 0 4px 0 2px;
    border: 1px solid #fff;
    border-radius: 10px;
}

.toggle input {
    appearance: none;
    width: 14px;
    height: 14px;
    border-radius: 50%;
    background: #fff;
}

.tbtn {
    display: flex;
    align-items: center;
    gap: 5px;
    margin-right: 11px;
}

.faded {
    opacity: 0.4;
}

.more {
    margin: 0 24px 0 2px;
}

.search {
    display: flex;
    align-items: center;
    gap: 12px;
    height: 32px;
    padding-left: 22px;
    border-radius: 3px;
    background: #cfe3d8;
}

.search input {
    flex: 1;
    font-size: 13px;
}

.search input::placeholder {
    color: #0f6b38;
}

.title-right {
    justify-content: flex-end;
}

.avatar {
    margin: 0 10px;
}

.win {
    display: grid;
    place-items: center;
    width: 48px;
    height: 32px;
}

/* Ribbon tabs */
.tabbar {
    display: flex;
    justify-content: space-between;
    height: 31px;
    padding: 0 14px 0 8px;
}

.tabs {
    display: grid;
    grid-template-columns: 49px 53px 44px 46px 107px 46px 52px 44px 45px 45px 53px 98px;
    justify-items: center;
    font-size: 13px;
}

.tabs a {
    height: 28px;
    padding-top: 8px;
    color: #262626;
    text-decoration: none;
    white-space: nowrap;
}

.tabs .active {
    font-weight: bold;
    border-bottom: 2px solid #107c41;
}

.tab-actions {
    display: flex;
    gap: 8px;
    padding-top: 3px;
    font-size: 12px;
}

.comment, .share {
    display: flex;
    align-items: center;
    justify-content: center;
    gap: 4px;
    width: 65px;
    height: 24px;
    border: 1px solid #8a8886;
    border-radius: 4px;
    background: #fff;
}

.share {
    border-color: #107c41;
    background: #107c41;
    color: #fff;
    font-size: 13px;
}

.present {
    height: 24px;
    margin-left: 7px;
}

/* Ribbon */
.ribbon {
    display: flex;
    height: 101px;
    margin: 0 8px;
    border-radius: 8px;
    background: #fff;
    box-shadow: 0 1px 3px rgba(0, 0, 0, 0.3);
}

.group {
    display: flex;
    flex-direction: column;
    flex: none;
    padding: 3px 0 0;
    background: linear-gradient(#d2d0ce, #d2d0ce) right center / 1px 90px no-repeat;
}

.g-clip { width: 210px; }
.g-font { width: 280px; }
.g-align { width: 325px; }
.g-num { width: 162px; }
.g-style { width: 192px; }
.g-cell { width: 146px; }
.g-edit { width: 229px; }
.g-addin { width: 58px; }
.g-data { width: 105px; }
.g-labs { width: 68px; }

.body {
    display: flex;
    justify-content: center;
    height: 78px;
}

.group footer {
    display: grid;
    grid-template-columns: 1fr auto;
    column-gap: 8px;
    align-items: center;
    height: 20px;
    padding: 0 4px;
    text-align: center;
    white-space: nowrap;
}

.group footer:not(:has(svg)) {
    display: block;
    line-height: 20px;
}

.launch {
    width: 9px;
    height: 9px;
}

.big {
    display: flex;
    flex: none;
    flex-direction: column;
    align-items: center;
    padding-top: 6px;
    line-height: 15px;
}

.big > svg:first-child {
    margin-bottom: 3px;
}

.big > .chev {
    margin-top: 6px;
}

.big:disabled, .item:disabled {
    color: #b1b1b1;
}

.rows {
    display: grid;
    grid-template-rows: repeat(3, 26px);
    margin-top: 1px;
    font-size: 11px;
}

.rows button {
    display: flex;
    align-items: center;
    gap: 5px;
}

.push {
    margin-left: auto;
}

.far {
    margin-left: 6px;
}

.g-clip .body {
    justify-content: flex-start;
    padding-left: 12px;
    gap: 4px;
}

.g-clip .big { width: 48px; }
.g-cell .big { width: 44px; }
.g-data .big { width: 45px; }

.g-style .body {
    padding-right: 4px;
}

.g-data .body {
    padding-right: 3px;
}

.g-style .big {
    width: 61px;
    font-size: 11px;
}

.g-edit .body {
    justify-content: flex-start;
    padding-left: 12px;
}

.g-edit .rows {
    width: 98px;
    margin-right: 9px;
}

.g-edit .big {
    width: 54px;
    font-size: 11px;
}

.stack {
    display: flex;
    flex-direction: column;
    justify-content: flex-start;
    gap: 8px;
    padding: 9px 8px 0;
}

.row {
    display: flex;
    align-items: center;
    gap: 2px;
    height: 24px;
}

.combo {
    display: grid;
    grid-template-columns: 1fr 16px;
    align-items: center;
    height: 24px;
    border: 1px solid #8a8886;
    border-radius: 4px;
}

.combo select {
    grid-area: 1 / 1 / 2 / 3;
    appearance: none;
    width: 100%;
    height: 22px;
    padding-left: 2px;
}

.combo .chev {
    grid-area: 1 / 2 / 2 / 3;
    pointer-events: none;
}

.font-name { width: 170px; }
.font-size { width: 40px; }
.format { width: 146px; }

.tool {
    display: grid;
    place-items: center;
    justify-self: center;
    width: 24px;
    height: 24px;
    font-size: 14px;
}

.tool i {
    font-family: "Liberation Serif", serif;
    font-size: 16px;
}

.tool.on {
    border: 1px solid #666;
    border-radius: 4px;
    background: #ebebeb;
}

.sep {
    justify-self: center;
    width: 1px;
    height: 24px;
    background: #d2d0ce;
}

.sep.tall {
    height: 61px;
    margin-top: 8px;
}

.font-row {
    display: grid;
    grid-template-columns: 24px 28px 24px 14px 7px 21px 16px 7px 23px 14px 28px 13px 6px 24px 14px;
}

.align-row {
    display: grid;
    grid-template-columns: 26px 26px 26px 3px 26px 26px;
    gap: 0;
}

.align-row .chev {
    justify-self: start;
}

.font-row, .num-row {
    gap: 0;
}

.g-align .body {
    justify-content: flex-start;
}

.g-align .stack {
    padding: 9px 5px 0 7px;
}

.wide {
    gap: 4px;
    width: 160px;
    padding-left: 3px;
    font-size: 11px;
}

.num-row {
    display: grid;
    grid-template-columns: 24px 16px 24px 28px 3px 26px 26px;
}

.decimal {
    display: block;
    font-size: 10px;
    line-height: 11px;
    text-align: right;
    width: 16px;
}

.collapse {
    margin: auto 10px 8px auto;
}

/* Formula bar */
.formula {
    display: flex;
    align-items: center;
    height: 46px;
    padding: 0 8px;
    font-size: 14px;
}

.box {
    display: flex;
    align-items: center;
    height: 31px;
    border: 1px solid #d2d0ce;
    border-radius: 4px;
    background: #fff;
}

.box input {
    flex: 1;
    min-width: 0;
}

.name {
    width: 198px;
    padding: 2px 4px 0 7px;
}

.formula .dots {
    margin: 0 9px 0 9px;
}

.fx {
    justify-content: space-around;
    width: 74px;
    margin-right: 4px;
}

.fx-btn {
    font-family: "Liberation Serif", serif;
    font-size: 19px;
    font-style: italic;
}

.value {
    flex: 1;
    padding: 0 4px 2px 12px;
    font-family: "Noto Sans CJK JP", sans-serif;
    font-size: 15px;
    font-weight: 300;
    font-feature-settings: normal;
}

/* Worksheet */
.sheet {
    position: relative;
    display: grid;
    grid-template-columns: 1fr 21px;
    flex: 1;
    min-height: 0;
    overflow: hidden;
    border-bottom: 1px solid #d8d8d8;
}

.cells {
    min-height: 0;
    overflow: hidden;
    font-family: "Noto Sans CJK JP", sans-serif;
    font-size: 15px;
    line-height: 24px;
    font-feature-settings: normal;
}

table {
    width: 100%;
    table-layout: fixed;
    border-spacing: 0;
    background: #fff;
    color: #000;
}

.c-no { width: 34px; }
.c-a { width: 96px; }
.c-b { width: 72px; }
.c-c { width: 337px; }
.c-d { width: 188px; }
.c-e { width: 171px; }
.c-f { width: 91px; }
.c-g { width: 84px; }
.c-h { width: 88px; }
.c-x { width: 72px; }

th, td {
    height: 28px;
    padding: 0 2px 3px;
    border-right: 1px solid #e0e0e0;
    border-bottom: 1px solid #e0e0e0;
    overflow: hidden;
    white-space: nowrap;
    text-align: left;
    font-weight: 300;
}

thead th {
    height: 24px;
    padding: 0;
    border-right-color: #b8b8b8;
    border-bottom-color: #999;
    background: #f0f0f0;
    line-height: 22px;
    text-align: center;
    color: #262626;
    font-weight: 400;
}

thead .selected {
    background: #d2d2d2;
    color: #1e7145;
}

.corner {
    border-right-color: #999;
    background: linear-gradient(135deg, transparent 50%, #b4b4b4 50%) 15px 5px / 15px 15px no-repeat #f0f0f0;
}

.rownum {
    border-right-color: #999;
    border-bottom-color: #c8c8c8;
    background: #f0f0f0;
    color: #262626;
    padding: 0;
    text-align: center;
}

.rownum.selected {
    background: #d2d2d2;
    color: #1e7145;
}

.number {
    text-align: right;
}

.red {
    color: #f00;
}

.head {
    position: relative;
    padding: 0 0 3px;
    border-color: #d9d9d9;
    background: #d9d9d9;
    text-align: center;
    font-weight: 700;
}

.filter {
    position: absolute;
    right: 0;
    bottom: 1px;
    display: grid;
    place-items: center;
    width: 17px;
    height: 17px;
    border: 1px solid #a3afbd;
    background: linear-gradient(#fff, #eef1f5);
}

.cursor {
    overflow: visible;
}

.cursor::after {
    content: "";
    position: absolute;
    inset: -1px -1px -2px -1px;
    border: 2px solid #107c41;
}

.cursor::before {
    content: "";
    position: absolute;
    z-index: 1;
    right: -3px;
    bottom: -3px;
    width: 6px;
    height: 6px;
    border: 1px solid #fff;
    background: #107c41;
}

.vscroll {
    display: flex;
    flex-direction: column;
    align-items: center;
    gap: 4px;
    margin: 0 2px;
    padding: 4px 0 2px;
    border-radius: 8px;
    background: #f5f5f5;
}

.thumb {
    border-radius: 5px;
    background: #707070;
}

.vscroll .thumb {
    width: 9px;
    height: 26%;
    margin-bottom: auto;
}

/* Filter menu */
.menu {
    position: absolute;
    left: 270px;
    top: 50px;
    width: 268px;
    border: 1px solid #666;
    background: #fff;
    box-shadow: 2px 2px 4px rgba(0, 0, 0, 0.3);
}

.item {
    display: grid;
    grid-template-columns: 24px 1fr 8px;
    align-items: center;
    width: 100%;
    height: 29px;
    padding: 0 9px 0 12px;
    text-align: left;
}

.item span {
    grid-column: 2;
    white-space: nowrap;
}

.sub::after {
    content: "";
    width: 7px;
    height: 7px;
    border: solid #444;
    border-width: 1px 1px 0 0;
    transform: rotate(45deg);
}

.hover {
    background: #f3f3f3;
}

.menu hr {
    height: 1px;
    margin: 1px 0 1px 32px;
    border: none;
    background: #d0d0d0;
}

.menu-search {
    display: block;
    width: 230px;
    height: 24px;
    margin: 5px 0 4px 30px;
    padding: 0 6px 3px;
    border: 1px solid #8a8886;
    border-radius: 3px;
}

.menu-search::placeholder {
    color: #777;
}

.tree {
    display: grid;
    grid-template: 230px 17px / 1fr 17px;
    width: 230px;
    margin-left: 30px;
    border: 1px solid #d2d0ce;
    background: #f0f0f0;
}

.tree ul {
    margin: 0;
    padding: 0 0 0 12px;
    overflow: hidden;
    background: #fff;
    list-style: none;
    font-size: 11px;
}

.tree li {
    height: 18px;
    background: repeating-linear-gradient(#888 0 1px, transparent 1px 2px) left top / 1px 100% no-repeat;
}

.tree li:first-child {
    background-position: left 9px;
}

.tree label {
    display: flex;
    align-items: center;
    gap: 4px;
    height: 18px;
    white-space: nowrap;
    color: #000;
}

.tree label::before {
    content: "";
    flex: none;
    width: 9px;
    margin-right: -3px;
    border-top: 1px dotted #888;
}

.tree input {
    appearance: none;
    display: grid;
    place-items: center;
    flex: none;
    width: 11px;
    height: 11px;
    border: 1px solid #444;
    background: #fff;
}

.tree input:checked::after {
    content: "";
    width: 7px;
    height: 4px;
    margin-bottom: 2px;
    border: solid #000;
    border-width: 0 0 2px 2px;
    transform: rotate(-45deg);
}

.tree-v, .tree-h {
    display: flex;
    align-items: center;
    gap: 5px;
}

.tree-v {
    flex-direction: column;
    padding: 7px 2px 7px 0;
}

.tree-h {
    padding: 0 5px;
}

.tree-v span, .tree-h span {
    background: #cdcdcd;
}

.tree-v span {
    width: 15px;
    height: 47px;
    margin-bottom: auto;
}

.tree-h span {
    width: 169px;
    height: 15px;
    margin-right: 8px;
}

.tree-v path, .tree-h path {
    fill: none;
    stroke: #505050;
    stroke-width: 2;
}

.menu-buttons {
    display: flex;
    justify-content: flex-end;
    gap: 9px;
    padding: 13px 6px 13px;
}

.menu-buttons button {
    height: 24px;
    border: 1px solid #8a8886;
    border-radius: 4px;
}

.ok { width: 35px; }
.cancel { width: 65px; }

.grip {
    position: absolute;
    right: 1px;
    bottom: 1px;
}

.submenu {
    position: absolute;
    left: 538px;
    top: 202px;
    display: flex;
    flex-direction: column;
    align-items: flex-start;
    width: 127px;
    padding: 7px 0 7px 4px;
    border: 1px solid #666;
    background: #fff;
    box-shadow: 2px 2px 4px rgba(0, 0, 0, 0.3);
}

.submenu strong {
    font-size: 11px;
    white-space: nowrap;
}

.swatch {
    width: 50px;
    height: 17px;
    margin: 7px 0 10px 26px;
    border: 1px solid #777;
    background: #f00;
}

.auto {
    margin-left: 32px;
}

/* Step markers */
.mark {
    position: absolute;
    border: 6px solid #f00;
    border-radius: 8px;
    box-shadow: 2px 2px 5px rgba(0, 0, 0, 0.4), inset 2px 2px 6px rgba(0, 0, 0, 0.45);
}

.mark-arrow {
    left: 512px;
    top: 22px;
    width: 37px;
    height: 38px;
}

.mark-item {
    left: 265px;
    top: 195px;
    width: 277px;
    height: 40px;
}

.mark-color {
    left: 552px;
    top: 224px;
    width: 90px;
    height: 38px;
}

.step {
    position: absolute;
    display: grid;
    place-items: center;
    width: 46px;
    height: 46px;
    padding-bottom: 5px;
    border-radius: 50%;
    background: #fff;
    box-shadow: 2px 2px 5px rgba(0, 0, 0, 0.5);
    color: #f00;
    font-family: "Noto Sans CJK JP", sans-serif;
    font-size: 46px;
    line-height: 41px;
    font-weight: 500;
    text-shadow: 1px 2px 2px rgba(0, 0, 0, 0.4);
}

.step-15 { left: 558px; top: 19px; }
.step-16 { left: 208px; top: 182px; }
.step-17 { left: 651px; top: 242px; }

/* Sheet tabs */
.sheetbar {
    display: flex;
    align-items: center;
    height: 32px;
    padding-right: 20px;
    border-bottom: 1px solid #c8c8c8;
}

.sheet-nav {
    display: flex;
    gap: 27px;
    width: 116px;
    padding-left: 28px;
}

.sheet-nav path {
    fill: none;
    stroke: #999;
}

.sheet-tab {
    display: grid;
    place-items: center;
    width: 78px;
    height: 20px;
    border-right: 1px solid #c8c8c8;
    font-size: 14px;
}

.sheet-tab.current {
    align-self: flex-start;
    width: 69px;
    height: 28px;
    margin-right: 3px;
    padding-top: 1px;
    border: none;
    border-radius: 0 0 5px 5px;
    background: #fff;
    box-shadow: 0 1px 2px rgba(0, 0, 0, 0.2);
}

.sheet-tab.current span {
    padding: 0 2px 2px;
    border-bottom: 2px solid #107c41;
}

.add {
    width: 94px;
    margin-right: auto;
}

.hscroll {
    display: flex;
    align-items: center;
    gap: 5px;
    width: 38.5%;
    height: 17px;
    margin-left: 13px;
    padding: 0 3px;
    border-radius: 8px;
    background: #f8f8f8;
}

.hscroll .thumb {
    flex: 1;
    height: 9px;
    margin-right: 22px;
}

/* Status bar */
.status {
    display: flex;
    align-items: center;
    height: 21px;
    padding: 0 20px 0 12px;
    background: #f5f5f5;
}

.macro {
    margin-left: 19px;
}

.views {
    display: flex;
    margin-left: auto;
}

.views button {
    display: grid;
    place-items: center;
    width: 40px;
    height: 21px;
}

.views .on {
    background: #dedede;
}

.zoom {
    display: flex;
    align-items: center;
    gap: 5px;
    margin-left: 8px;
}

.zoom input {
    appearance: none;
    width: 100px;
    height: 16px;
    background: linear-gradient(#666, #666) center / 100% 1px no-repeat;
}

.zoom input::-webkit-slider-thumb {
    appearance: none;
    width: 5px;
    height: 11px;
    background: #555;
}

.zoom output {
    width: 41px;
    text-align: right;
}
```
FILE: script.js
```js
var letters = 'ABCDEFGHIJKLMNOPQR'.split('');
var heads = ['注文日', '商品番号', '商品名', '大分類', '中分類', '単価', '販売数', '売上'];
var out = 'アウトドア・トラベル';
var tech = '技術・エレクトロニクス';
var daily = '日常用品';

var data = [
    ['4月1日', 'A020101', 'ポータブル扇風機', out, '扇風機・冷却製品', '1,800', '200', '360,000'],
    ['4月1日', 'A020301', 'ソーラー充電ヒーター', out, '暖房装置', '2,500', '117', '292,500'],
    ['4月1日', 'A020303', '軽量ヒートベスト', out, '暖房装置', '1,500', '149', '223,500'],
    ['4月1日', 'A020303', '軽量ヒートベスト', out, '暖房装置', '1,500', '131', '196,500'],
    ['4月1日', 'A020305', '電熱手袋', out, '暖房装置', '4,000', '119', '476,000'],
    ['4月1日', 'A021103', 'ハンズフリーバッグ', out, '旅行アクセサリー', '2,500', '52', '130,000'],
    ['4月1日', 'A021302', '強化ナノプロテクトスプレー', out, '防水スプレー', '1,800', '51', '91,800'],
    ['4月1日', 'G010102', 'GPSキーホルダー', tech, 'キー・追跡装置', '4,500', '169', '760,500'],
    ['4月1日', 'G010104', 'ペット用トラッカー', tech, 'キー・追跡装置', '3,800', '78', '296,400'],
    ['4月1日', 'G010202', 'アウトドア用LEDランタン', tech, 'ライト・照明', '3,000', '55', '165,000'],
    ['4月1日', 'G010204', 'ペン型懐中電灯', tech, 'ライト・照明', '800', '87', '69,600'],
    ['4月1日', 'G010302', 'カラビナ付きポータブルチャージャー', tech, '充電器・電源', '2,200', '81', '178,200'],
    ['4月1日', 'N010203', '折りたたみウォーターボトル', daily, '給水・飲料関連', '1,200', '185', '222,000'],
    ['4月2日', 'A020103', 'クリップオン扇風機', out, '扇風機・冷却製品', '1,600', '56', '89,600'],
    ['4月2日', 'A020105', '折り畳み式扇風機', out, '扇風機・冷却製品', '700', '135', '94,500'],
    ['4月2日', 'A021104', '旅行用防水ポーチ', out, '旅行アクセサリー', '1,500', '173', '259,500'],
    ['4月2日', 'A021105', 'パスポートケース', out, '旅行アクセサリー', '1,800', '197', '354,600'],
    ['4月2日', 'G010101', 'スマートタグ', tech, 'キー・追跡装置', '2,500', '99', '247,500'],
    ['4月2日', 'G010205', 'LEDサイクルライト', tech, 'ライト・照明', '1,500', '60', '90,000'],
    ['4月2日', 'G010301', 'ソーラー充電ミニバッテリー', tech, '充電器・電源', '1,800', '183', '329,400'],
    ['4月2日', 'G010302', 'カラビナ付きポータブルチャージャー', tech, '充電器・電源', '2,200', '191', '420,200'],
    ['4月2日', 'N010101', 'ポケットサイズサンプロテクター', daily, '日焼け防止製品', '950', '136', '129,200'],
    ['4月2日', 'N010103', 'トラベルサイズ日焼け止めローション', daily, '日焼け防止製品', '700', '89', '62,300'],
    ['4月2日', 'N010104', 'ウォータープルーフサンスクリーンスプレー', daily, '日焼け防止製品', '1,150', '137', '157,550'],
    ['4月2日', 'N010105', 'SPF30 リップバーム', daily, '日焼け防止製品', '500', '94', '47,000'],
    ['4月2日', 'N010301', 'RFIDブロッキングミニウォレット', daily, 'カードホルダー・財布', '2,300', '142', '326,600'],
    ['4月2日', 'N010302', 'アルミニウム製カードケース', daily, 'カードホルダー・財布', '1,200', '178', '213,600']
];

var tree = ['(すべて選択)', 'GPSキーホルダー', 'LEDサイクルライト', 'RFIDブロッキングミニウォレット', 'SPF30 リップバーム',
    'SPF50+ フェイススティック', 'USB充電式ポケットヒーター', 'アウトドア用LEDランタン', 'アルミニウム製カードケース',
    'イベント用フラッシュライト', 'インフューズウォーターボトル', 'ウォータープルーフサンスクリーンスプレー', 'エコウォーターポーチ'];

var arrow = '<svg width="7" height="4" viewBox="0 0 7 4" fill="#555"><path d="M0 0h7L3.500 4z"/></svg>';
var sorted = '<svg width="13" height="12" viewBox="0 0 13 12" fill="#555"><path d="M0 7h6L3 10z"/><path d="M9.500 11V2M7.500 4l2-2.500 2 2.500" fill="none" stroke="#555"/></svg>';
var blanks = '<td></td>'.repeat(11);

// Column letters
document.getElementById('letters').innerHTML += letters.map(function(l) {
    return '<th' + (l === 'A' ? ' class="selected"' : '') + '>' + l + '</th>';
}).join('') + '<th></th>';

// Header row with the filter buttons
var html = '<tr><th class="rownum selected">1</th>' + heads.map(function(h, i) {
    return '<td class="head' + (i === 0 ? ' cursor' : '') + '">' + h +
        '<button class="filter" aria-label="' + h + 'のフィルター">' + (i === 0 ? sorted : arrow) + '</button></td>';
}).join('') + blanks + '</tr>';

// Data rows
data.forEach(function(row, r) {
    html += '<tr><th class="rownum">' + (r + 2) + '</th>' + row.map(function(v, i) {
        var cls = i === 0 || i > 4 ? 'number' : '';
        if (i === 2 && (r === 7 || r === 13)) {
            cls = 'red';
        }
        return '<td class="' + cls + '">' + v + '</td>';
    }).join('') + blanks + '</tr>';
});
document.getElementById('rows').innerHTML = html;

// Items of the filter list
document.getElementById('tree').innerHTML = tree.map(function(t) {
    return '<li><label><input type="checkbox" checked>' + t + '</label></li>';
}).join('');
```
